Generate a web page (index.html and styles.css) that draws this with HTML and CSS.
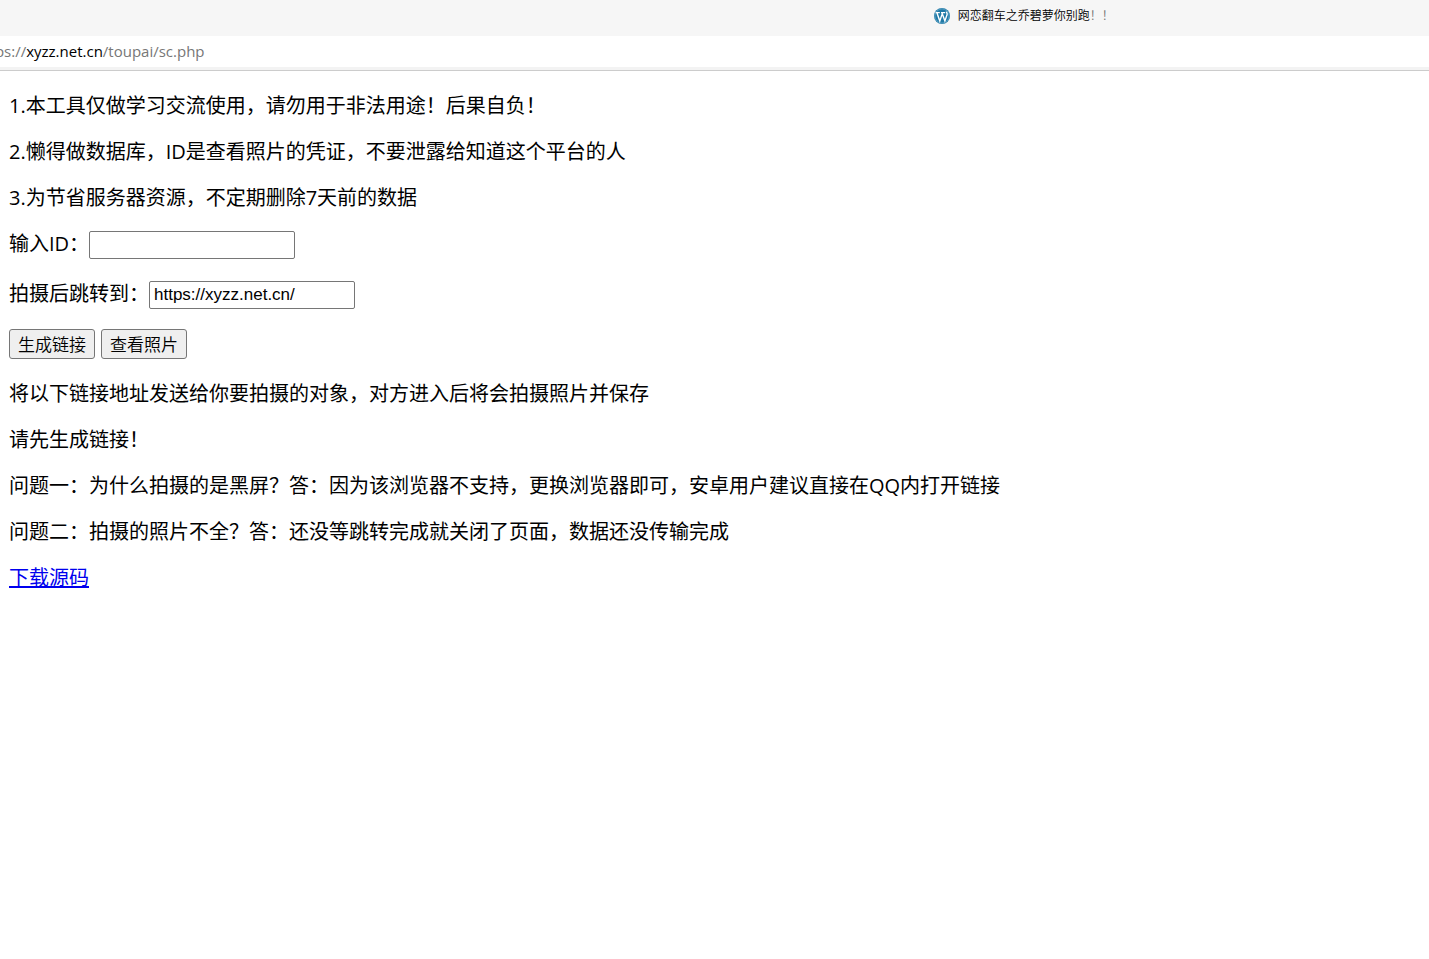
FILE: index.html
```
<!DOCTYPE html>
<html lang="zh-CN">
<head>
    <meta charset="UTF-8">
    <meta name="viewport" content="width=device-width, initial-scale=1.0">
    <title>网恋翻车之乔碧萝你别跑！！</title>
    <link rel="stylesheet" href="styles.css">
</head>
<body>
    <header>
        <div class="tabs">
            <svg class="favicon" viewBox="0 0 16 16" width="16" height="16" aria-hidden="true">
                <circle cx="8" cy="8" r="8" fill="#2079a6"/>
                <circle cx="8" cy="8" r="7.1" fill="none" stroke="#8cc3dd" stroke-width="0.5"/>
                <path d="M1.6 4.6h4.2M7 4.6h4.2M3 5l2.8 8L8 6.4M8 5l2.9 8 2.2-6.4c.4-1.4-.7-1.8-.6-3" fill="none" stroke="#fff" stroke-width="1.4"/>
            </svg>
            <span class="tab-title">网恋翻车之乔碧萝你别跑<span class="fade">！！</span></span>
        </div>
        <div class="address">https://<span class="host">xyzz.net.cn</span>/toupai/sc.php</div>
    </header>

    <main>
        <p>1.本工具仅做学习交流使用，请勿用于非法用途！后果自负！</p>
        <p>2.懒得做数据库，ID是查看照片的凭证，不要泄露给知道这个平台的人</p>
        <p>3.为节省服务器资源，不定期删除7天前的数据</p>
        <form>
            <div class="row">
                <label for="id">输入ID：</label>
                <input type="text" id="id">
            </div>
            <div class="row">
                <label for="url">拍摄后跳转到：</label>
                <input type="text" id="url" value="https://xyzz.net.cn/">
            </div>
            <div class="row buttons">
                <button type="button">生成链接</button>
                <button type="button">查看照片</button>
            </div>
        </form>
        <p>将以下链接地址发送给你要拍摄的对象，对方进入后将会拍摄照片并保存</p>
        <p>请先生成链接！</p>
        <p>问题一：为什么拍摄的是黑屏？答：因为该浏览器不支持，更换浏览器即可，安卓用户建议直接在QQ内打开链接</p>
        <p>问题二：拍摄的照片不全？答：还没等跳转完成就关闭了页面，数据还没传输完成</p>
        <p><a href="#">下载源码</a></p>
    </main>
</body>
</html>
```
FILE: styles.css
```
body {
    margin: 0;
    background: #fff;
    color: #000;
    font-family: "Open Sans", "Noto Sans CJK SC", sans-serif;
    font-size: 20px;
    line-height: 26px;
}
.tabs {
    display: flex;
    align-items: center;
    gap: 8px;
    height: 32px;
    padding: 0 0 4px 65%;
    background: #f6f6f6;
    font-size: 12px;
    font-weight: 350;
    line-height: 18px;
}
.favicon {
    margin-left: 5px;
}
.fade {
    color: #777;
}
.address {
    height: 31px;
    overflow: hidden;
    border-bottom: 3px solid #f3f3f3;
    box-shadow: 0 1px #ccc;
    color: #777;
    font-size: 15px;
    line-height: 31px;
    text-indent: -25px;
    white-space: nowrap;
}
.host {
    color: #000;
}
main {
    padding: 3px 9px;
}
p {
    margin: 20px 0;
}
.row {
    display: flex;
    align-items: flex-start;
    height: 30px;
    margin-bottom: 20px;
}
input {
    box-sizing: border-box;
    width: 206px;
    height: 28px;
    padding: 1px 4px;
    border: 1px solid #767676;
    border-radius: 2px;
    font-family: "Liberation Sans", sans-serif;
    font-size: 17px;
}
.buttons {
    gap: 6px;
    margin-top: -2px;
    margin-bottom: 22px;
}
button {
    height: 30px;
    padding: 0 8px;
    border: 1px solid #767676;
    border-radius: 3px;
    background: #efefef;
    color: #000;
    font-family: "Noto Sans CJK SC", sans-serif;
    font-size: 17px;
    font-weight: 350;
    line-height: 26px;
}
a {
    color: #0000ee;
}
```
